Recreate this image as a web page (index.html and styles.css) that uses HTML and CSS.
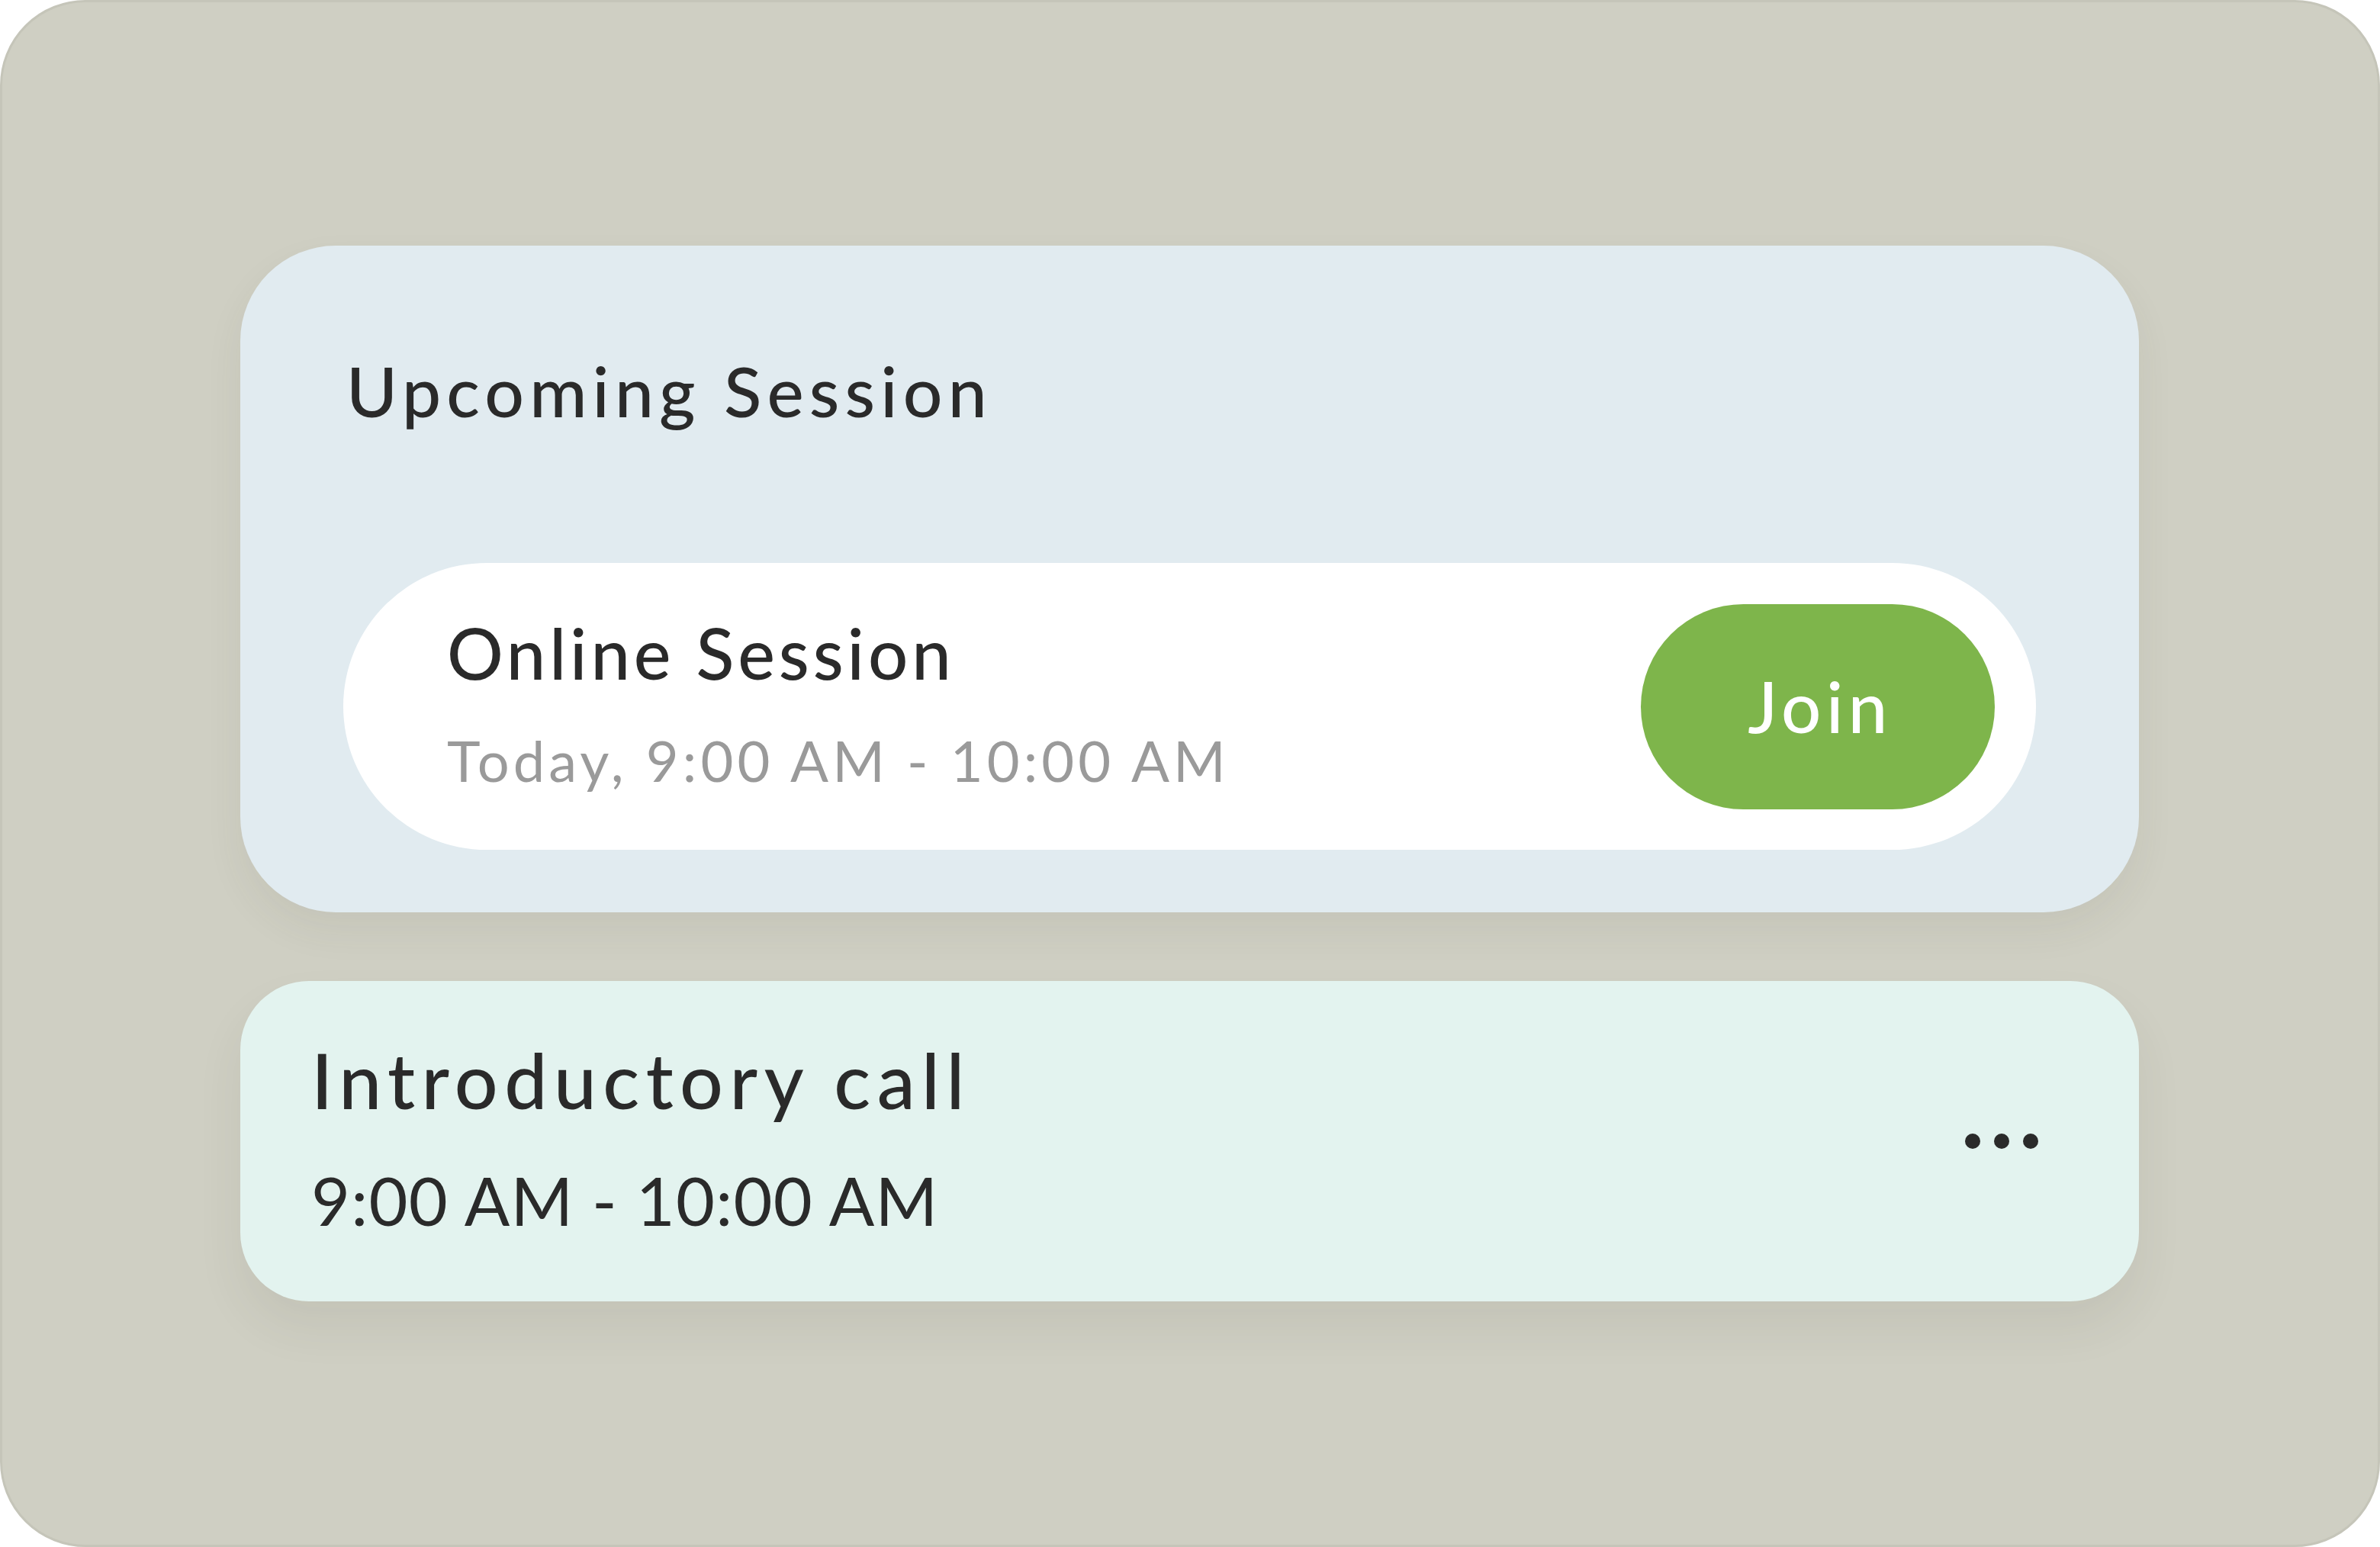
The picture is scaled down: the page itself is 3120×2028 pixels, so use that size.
FILE: index.html
```html
<!DOCTYPE html>
<html lang="en">
<head>
<meta charset="utf-8">
<title>Sessions</title>
<link rel="stylesheet" href="styles.css">
</head>
<body>
  <div class="frame">
    <section class="card upcoming">
      <h2 class="card-title">Upcoming Session</h2>
      <div class="session">
        <div class="session-info">
          <div class="session-name">Online Session</div>
          <div class="session-time">Today, 9:00 AM - 10:00 AM</div>
        </div>
        <button class="join" type="button">Join</button>
      </div>
    </section>
    <section class="card intro">
      <div class="intro-info">
        <div class="intro-name">Introductory call</div>
        <div class="intro-time">9:00 AM - 10:00 AM</div>
      </div>
      <button class="more" type="button" aria-label="More options">
        <span class="dot"></span><span class="dot"></span><span class="dot"></span>
      </button>
    </section>
  </div>
</body>
</html>
```

FILE: styles.css
```css
* { box-sizing: border-box; }

html, body {
  margin: 0;
  padding: 0;
  background: #ffffff;
}

body {
  width: 3120px;
  height: 2028px;
  font-family: Lato, "Open Sans", "Noto Sans", sans-serif;
  color: #2a2a2a;
}

.frame {
  width: 3120px;
  height: 2028px;
  border: 3px solid #c5c5b9;
  border-radius: 112px;
  background: #cfcfc3;
  padding: 319px 313px 0 312px;
  display: flex;
  flex-direction: column;
  gap: 90px;
}

.card {
  width: 100%;
}

.upcoming {
  height: 874px;
  background: #e1ebf0;
  border-radius: 125px;
  padding: 135px 135px 82px 135px;
  display: flex;
  flex-direction: column;
  box-shadow: 0 24px 50px rgba(70, 70, 50, 0.07);
}

.card-title {
  margin: 0 0 172px 0;
  padding-left: 4px;
  font-size: 91px;
  font-weight: 500;
  line-height: 1.2;
  letter-spacing: 7.2px;
}

.session {
  height: 376px;
  background: #ffffff;
  border-radius: 188px;
  padding: 54px 54px 54px 136px;
  display: flex;
  align-items: center;
  justify-content: space-between;
}

.session-info {
  display: flex;
  flex-direction: column;
}

.session-name {
  font-size: 92px;
  font-weight: 500;
  line-height: 1.2;
  letter-spacing: 4.9px;
  margin-top: -10px;
}

.session-time {
  margin-top: 42px;
  font-size: 74px;
  line-height: 1.2;
  letter-spacing: 5.1px;
  color: #9a9a9a;
}

.join {
  width: 464px;
  height: 269px;
  border: none;
  border-radius: 135px;
  background: #7eb54b;
  color: #ffffff;
  font-family: inherit;
  font-size: 92px;
  font-weight: 500;
  letter-spacing: 6.5px;
  line-height: 1;
  padding: 0 0 0 6px;
}

.intro {
  height: 420px;
  background: #e3f3ef;
  border-radius: 90px;
  padding: 0 132px 0 93px;
  display: flex;
  align-items: center;
  justify-content: space-between;
  box-shadow: 0 34px 60px rgba(70, 70, 50, 0.08);
}

.intro-info {
  display: flex;
  flex-direction: column;
}

.intro-name {
  font-size: 100px;
  font-weight: 500;
  line-height: 1.2;
  letter-spacing: 8.5px;
  margin-top: -10px;
}

.intro-time {
  margin-top: 46px;
  font-size: 88px;
  line-height: 1.2;
  letter-spacing: 1.2px;
}

.more {
  display: flex;
  gap: 18px;
  border: none;
  background: transparent;
  padding: 0;
}

.dot {
  width: 20px;
  height: 20px;
  border-radius: 50%;
  background: #2a2a2a;
}
```
